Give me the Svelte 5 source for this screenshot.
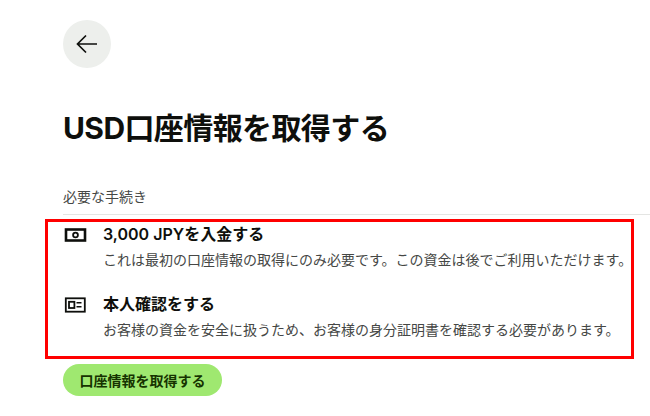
<script lang="ts">
	const steps = [
		{
			icon: 'cash',
			title: '3,000 JPYを入金する',
			text: 'これは最初の口座情報の取得にのみ必要です。この資金は後でご利用いただけます。'
		},
		{
			icon: 'id',
			title: '本人確認をする',
			text: 'お客様の資金を安全に扱うため、お客様の身分証明書を確認する必要があります。'
		}
	];
</script>

<main class="page">
	<button class="back" aria-label="戻る">
		<svg width="24" height="24" viewBox="0 0 24 24" fill="none" stroke="#0e0f0c" stroke-width="1.7">
			<path d="M22 12H3M11 3.5 2.5 12l8.5 8.5" />
		</svg>
	</button>

	<h1>USD口座情報を取得する</h1>

	<div class="label">必要な手続き</div>

	<div class="steps">
		{#each steps as step}
			<div class="step">
				<div class="icon">
					{#if step.icon === 'cash'}
						<svg width="24" height="16" viewBox="0 0 24 16" fill="none" stroke="#0e0f0c" stroke-width="2.6">
							<rect x="3" y="2.5" width="19" height="11" />
							<circle cx="12.5" cy="8" r="2.4" stroke-width="1.8" />
						</svg>
					{:else}
						<svg width="24" height="16" viewBox="0 0 24 16" fill="none" stroke="#0e0f0c">
							<rect x="2.8" y="1.3" width="19" height="13.4" stroke-width="1.8" />
							<rect x="6" y="4.8" width="5.4" height="6.2" stroke-width="1.8" />
							<path d="M13.5 5.8h5M13.5 9.8h5" stroke-width="1.4" />
						</svg>
					{/if}
				</div>
				<div class="body">
					<div class="title">{step.title}</div>
					<div class="text">{step.text}</div>
				</div>
			</div>
		{/each}
		<div class="highlight"></div>
	</div>

	<button class="primary">口座情報を取得する</button>
</main>

<style>
	:global(body) {
		margin: 0;
		background: #fff;
		overflow: hidden;
	}

	.page {
		width: 650px;
		height: 416px;
		box-sizing: border-box;
		padding: 20px 0 0 63px;
		font-family: Inter, 'Noto Sans CJK JP', sans-serif;
		overflow: hidden;
	}

	.back {
		display: flex;
		align-items: center;
		justify-content: center;
		width: 48px;
		height: 48px;
		padding: 0;
		border: none;
		border-radius: 50%;
		background: #edefec;
	}

	h1 {
		margin: 38px 0 0;
		font-size: 30px;
		line-height: 44px;
		font-weight: 700;
		letter-spacing: -0.6px;
		color: #0e0f0c;
	}

	.label {
		margin-top: 36px;
		padding-bottom: 6px;
		font-size: 14px;
		line-height: 22px;
		color: #454745;
		border-bottom: 1px solid #e4e5e3;
	}

	.steps {
		position: relative;
		display: flex;
		flex-direction: column;
		gap: 21px;
		padding-top: 7px;
		height: 143px;
		box-sizing: border-box;
	}

	.step {
		display: flex;
	}

	.icon {
		width: 40px;
		height: 26px;
		display: flex;
		align-items: center;
	}

	.title {
		font-size: 16px;
		line-height: 24px;
		font-weight: 600;
		color: #0e0f0c;
	}

	.text {
		margin-top: 3px;
		font-size: 14px;
		line-height: 22px;
		color: #454745;
		white-space: nowrap;
	}

	.highlight {
		position: absolute;
		left: -18px;
		top: 4px;
		width: 589px;
		height: 140px;
		box-sizing: border-box;
		border: 3px solid #f00;
		pointer-events: none;
	}

	.primary {
		display: block;
		width: 159px;
		height: 32px;
		margin-top: 6px;
		padding: 0;
		border: none;
		border-radius: 16px;
		background: #9fe870;
		color: #163300;
		font-family: inherit;
		font-size: 14px;
		font-weight: 600;
	}
</style>
